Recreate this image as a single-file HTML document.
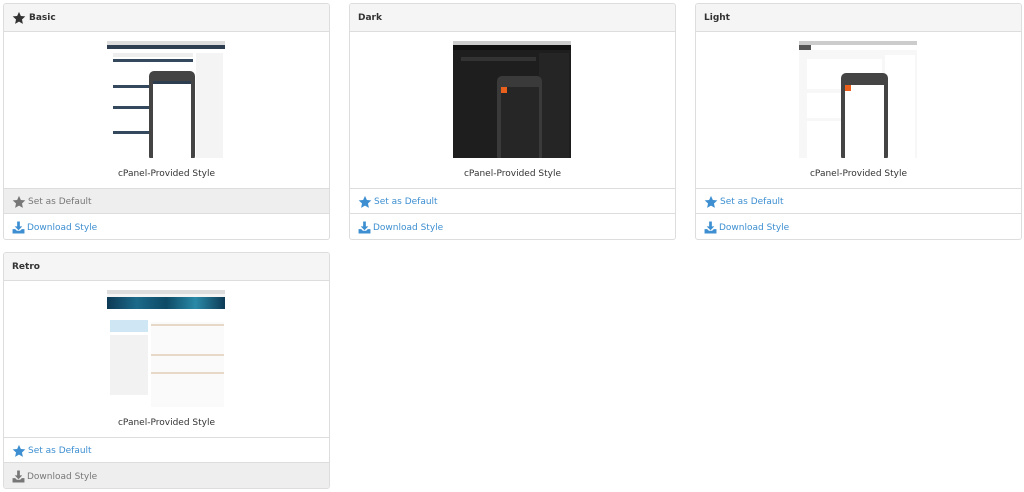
<!DOCTYPE html>
<html><head><meta charset="utf-8"><style>
*{box-sizing:border-box;margin:0;padding:0}
body{width:1024px;height:492px;background:#fff;font-family:"DejaVu Sans","Liberation Sans",sans-serif;font-size:9px;color:#333;position:relative;overflow:hidden}
.p{position:absolute;width:327px;height:237px;border:1px solid #ddd;border-radius:3px;background:#fff;overflow:hidden}
.h{height:28px;background:#f5f5f5;border-bottom:1px solid #ddd;font-weight:bold;font-size:9px;color:#333;padding:8px 8px;display:flex;align-items:center;gap:3px}
.img{position:absolute;left:103px;top:37px;width:118px;height:117px;overflow:hidden}
.cap{position:absolute;top:165px;width:100%;text-align:center;font-size:9px;color:#333}
.b{position:absolute;left:0;width:100%;height:25px;border-top:1px solid #ddd;padding:1px 8px 0;display:flex;align-items:center;gap:2px;color:#3d8fd1;font-size:9px}
.b.d{background:#eee;color:#777}
.b1{top:184px}.b2{top:209px;height:27px}
svg{display:block}
</style></head><body>
<svg width="0" height="0" style="position:absolute"><defs>
<symbol id="st" viewBox="0 0 24 24"><path d="M12 1.5l3.2 7 7.6.8-5.7 5.2 1.6 7.5L12 18.2 5.3 22l1.6-7.5L1.2 9.3l7.6-.8z"/></symbol>
<symbol id="dl" viewBox="0 0 24 24"><path d="M9.5 1h5v9h4.5L12 17 5 10h4.5z M1 15h5l3 3h6l3-3h5v8H1z"/></symbol>
</defs></svg>

<div class="p" style="left:3px;top:3px">
<div class="h"><svg width="14" height="14" fill="#333"><use href="#st"/></svg>Basic</div>
<div class="img" style="background:#fff">
<div style="height:4px;background:#ddd"></div><div style="height:4px;background:#2c3e50"></div>
<div style="position:absolute;left:6px;top:12px;width:80px;height:4px;background:#eee"></div>
<div style="position:absolute;left:6px;top:18px;width:80px;height:3px;background:#34495e"></div>
<div style="position:absolute;left:6px;top:44px;width:80px;height:3px;background:#34495e"></div>
<div style="position:absolute;left:6px;top:65px;width:80px;height:3px;background:#34495e"></div>
<div style="position:absolute;left:6px;top:90px;width:80px;height:3px;background:#34495e"></div>
<div style="position:absolute;left:89px;top:12px;width:27px;height:105px;background:#f4f4f4"></div>
<div style="position:absolute;left:42px;top:30px;width:46px;height:90px;background:#444;border-radius:5px"></div>
<div style="position:absolute;left:46px;top:40px;width:38px;height:77px;background:#fff"></div>
<div style="position:absolute;left:46px;top:40px;width:38px;height:3px;background:#2c3e50"></div>
</div>
<div class="cap">cPanel-Provided Style</div>
<div class="b b1 d"><svg width="14" height="14" fill="#777"><use href="#st"/></svg>Set as Default</div>
<div class="b b2"><svg width="13" height="13" fill="#3d8fd1"><use href="#dl"/></svg>Download Style</div>
</div>

<div class="p" style="left:349px;top:3px">
<div class="h">Dark</div>
<div class="img" style="background:#1e1e1e">
<div style="height:4px;background:#ccc"></div><div style="height:5px;background:#111"></div>
<div style="position:absolute;left:8px;top:16px;width:75px;height:4px;background:#333"></div>
<div style="position:absolute;left:86px;top:12px;width:30px;height:105px;background:#252525"></div>
<div style="position:absolute;left:44px;top:35px;width:45px;height:85px;background:#3a3a3a;border-radius:5px"></div>
<div style="position:absolute;left:48px;top:46px;width:38px;height:72px;background:#262626"></div>
<div style="position:absolute;left:48px;top:46px;width:6px;height:6px;background:#e8601c"></div>
</div>
<div class="cap">cPanel-Provided Style</div>
<div class="b b1"><svg width="14" height="14" fill="#3d8fd1"><use href="#st"/></svg>Set as Default</div>
<div class="b b2"><svg width="13" height="13" fill="#3d8fd1"><use href="#dl"/></svg>Download Style</div>
</div>

<div class="p" style="left:695px;top:3px">
<div class="h">Light</div>
<div class="img" style="background:#f7f7f7">
<div style="height:4px;background:#ccc"></div><div style="height:5px;background:#fff"></div>
<div style="position:absolute;left:0;top:4px;width:12px;height:5px;background:#555"></div>
<div style="position:absolute;left:8px;top:18px;width:75px;height:30px;background:#fff"></div>
<div style="position:absolute;left:8px;top:52px;width:75px;height:25px;background:#fff"></div>
<div style="position:absolute;left:8px;top:80px;width:75px;height:37px;background:#fff"></div>
<div style="position:absolute;left:86px;top:14px;width:30px;height:103px;background:#fff"></div>
<div style="position:absolute;left:42px;top:32px;width:47px;height:88px;background:#444;border-radius:5px"></div>
<div style="position:absolute;left:46px;top:44px;width:39px;height:74px;background:#fff"></div>
<div style="position:absolute;left:46px;top:44px;width:6px;height:6px;background:#e8601c"></div>
</div>
<div class="cap">cPanel-Provided Style</div>
<div class="b b1"><svg width="14" height="14" fill="#3d8fd1"><use href="#st"/></svg>Set as Default</div>
<div class="b b2"><svg width="13" height="13" fill="#3d8fd1"><use href="#dl"/></svg>Download Style</div>
</div>

<div class="p" style="left:3px;top:252px">
<div class="h">Retro</div>
<div class="img" style="background:#fff">
<div style="height:4px;background:#ddd"></div><div style="height:3px;background:#f4f4f4"></div>
<div style="height:12px;background:linear-gradient(90deg,#0d3a55,#1c6a8a,#0d4a66,#2a8aa8,#0d3a55)"></div>
<div style="position:absolute;left:3px;top:30px;width:38px;height:12px;background:#cfe6f5"></div>
<div style="position:absolute;left:3px;top:45px;width:38px;height:60px;background:#f2f2f2"></div>
<div style="position:absolute;left:44px;top:32px;width:73px;height:85px;background:#fafafa"></div>
<div style="position:absolute;left:44px;top:34px;width:73px;height:2px;background:#e8d8c8"></div>
<div style="position:absolute;left:44px;top:64px;width:73px;height:2px;background:#e8d8c8"></div>
<div style="position:absolute;left:44px;top:82px;width:73px;height:2px;background:#e8d8c8"></div>
</div>
<div class="cap">cPanel-Provided Style</div>
<div class="b b1"><svg width="14" height="14" fill="#3d8fd1"><use href="#st"/></svg>Set as Default</div>
<div class="b b2 d"><svg width="13" height="13" fill="#777"><use href="#dl"/></svg>Download Style</div>
</div>
</body></html>
